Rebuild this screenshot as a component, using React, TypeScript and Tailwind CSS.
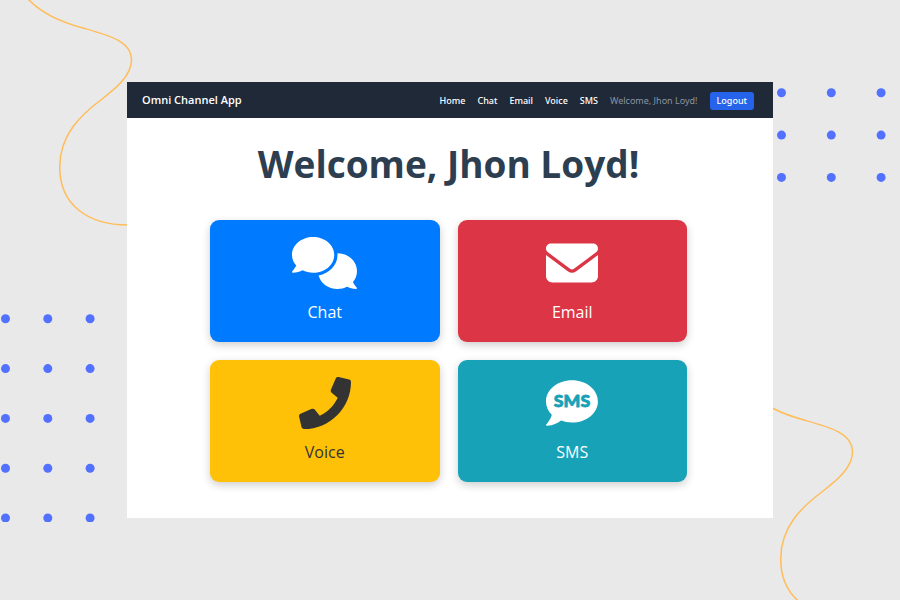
import type { ComponentType } from "react";
import { FaPhone } from "react-icons/fa";
import { FaEnvelope } from "react-icons/fa6";

const links = ["Home", "Chat", "Email", "Voice", "SMS"];

type IconProps = { className?: string };

function CommentsIcon({ className }: IconProps) {
  return (
    <svg className={className} viewBox="0 0 640 512" fill="currentColor" aria-hidden="true">
      <path d="M416 176C416 78.8 322.9 0 208 0S0 78.8 0 176c0 39.57 15.62 75.96 41.67 105.4c-16.39 32.76-39.23 57.32-39.59 57.68c-2.1 2.205-2.67 5.475-1.441 8.354C1.9 350.3 4.602 352 7.66 352c38.35 0 70.76-11.12 95.74-24.04C134.2 343.1 169.8 352 208 352C322.9 352 416 273.2 416 176zM599.6 443.7C624.8 413.9 640 376.6 640 336C640 238.8 554 160 448 160c-.3145 0-.6191 .041-.9336 .043C447.5 165.3 448 170.6 448 176c0 98.62-79.68 181.2-186.1 202.5C282.7 455.1 357.1 512 448 512c33.69 0 65.32-8.008 92.85-21.98C565.2 502 596.1 512 632.3 512c3.059 0 5.76-1.725 7.02-4.605c1.229-2.879 .6582-6.148-1.441-8.354C637.6 498.7 615.9 475.3 599.6 443.7z" />
    </svg>
  );
}

function SmsIcon({ className }: IconProps) {
  return (
    <svg className={className} viewBox="0 0 512 512" fill="currentColor" aria-hidden="true">
      <path d="M256 32C114.6 32 .0272 125.1 .0272 240c0 49.63 21.35 94.98 56.97 130.7c-12.5 50.37-54.27 95.27-54.77 95.77c-2.25 2.25-2.875 5.734-1.5 8.734C1.979 478.2 4.75 480 8 480c66.25 0 115.1-31.76 140.6-51.39C181.2 440.9 217.6 448 256 448c141.4 0 255.1-93.13 255.1-208S397.4 32 256 32z" />
      <text
        x="256"
        y="299"
        textAnchor="middle"
        className="fill-[#17a2b8] stroke-[#17a2b8] font-['Lato',sans-serif] text-[174px] font-black"
        strokeWidth="8"
        strokeLinejoin="round"
      >
        SMS
      </text>
    </svg>
  );
}

const channels: {
  name: string;
  icon: ComponentType<IconProps>;
  style: string;
  width: string;
}[] = [
  { name: "Chat", icon: CommentsIcon, style: "bg-[#007bff] text-white", width: "w-[65px]" },
  { name: "Email", icon: FaEnvelope, style: "bg-[#dc3545] text-white", width: "w-[52px]" },
  { name: "Voice", icon: FaPhone, style: "bg-[#ffc107] text-[#333333]", width: "w-[52px]" },
  { name: "SMS", icon: SmsIcon, style: "bg-[#17a2b8] text-white", width: "w-[52px]" },
];

function Squiggle({ className }: IconProps) {
  return (
    <svg
      className={className}
      width="140"
      height="230"
      viewBox="0 0 140 230"
      fill="none"
      stroke="#ffbd59"
      strokeWidth="1.5"
      aria-hidden="true"
    >
      <path d="M28 -1C43 15 66 23.5 83 28C108 35 131.5 41 131.5 60C131.5 76 115 89 101.5 99.5C82 114 59.7 134 59.7 167C59.7 205 88 225 128 225" />
    </svg>
  );
}

function Dots({
  className,
  columns,
  rows,
  stepX,
  stepY,
  height,
}: {
  className: string;
  columns: number;
  rows: number;
  stepX: number;
  stepY: number;
  height: number;
}) {
  const dots = Array.from({ length: columns * rows }, (_, i) => i);
  const width = (columns - 1) * stepX + 10;
  return (
    <svg
      className={className}
      width={width}
      height={height}
      viewBox={`0 0 ${width} ${height}`}
      fill="#5271ff"
      aria-hidden="true"
    >
      {dots.map((i) => (
        <circle
          key={i}
          cx={4.5 + (i % columns) * stepX}
          cy={4.8 + Math.floor(i / columns) * stepY}
          r="4.5"
        />
      ))}
    </svg>
  );
}

export default function App() {
  return (
    <div className="relative flex min-h-screen items-center overflow-hidden bg-[#e9e9e9] px-[127px] font-['Noto_Sans','Open_Sans',sans-serif]">
      <Squiggle className="absolute top-0 left-0" />
      <Squiggle className="absolute right-[39px] bottom-[-22px]" />
      <Dots className="absolute top-[88px] right-[13px]" columns={3} rows={3} stepX={49.8} stepY={42.3} height={95} />
      <Dots className="absolute bottom-[78px] left-[1px]" columns={3} rows={5} stepX={42.3} stepY={49.8} height={208} />

      <div className="relative grow bg-white">
        <header className="flex h-9 items-center justify-between bg-[#1f2937] pr-[19px] pl-[15px]">
          <a href="#" className="font-['Open_Sans',sans-serif] text-[11px] leading-4 font-semibold text-white">
            Omni Channel App
          </a>
          <nav className="flex items-center gap-3 pt-px text-[9px] leading-[18px] font-medium text-white">
            {links.map((link) => (
              <a key={link} href="#">
                {link}
              </a>
            ))}
            <span className="font-normal text-[#8b94a1]">Welcome, Jhon Loyd!</span>
            <button type="button" className="rounded-[3px] bg-[#2563eb] px-[7px] font-medium">
              Logout
            </button>
          </nav>
        </header>

        <main className="pr-[86px] pb-9 pl-[83px] font-['Open_Sans',sans-serif]">
          <h1 className="pt-[18px] pb-7 text-center text-[37px] leading-14 font-bold whitespace-nowrap text-[#2c3e50]">
            Welcome, Jhon Loyd!
          </h1>
          <div className="grid grid-cols-2 gap-[18px]">
            {channels.map(({ name, icon: Icon, style, width }) => (
              <button
                key={name}
                type="button"
                className={`flex flex-col items-center rounded-[9px] pt-[17px] pb-[17px] shadow-[0_3px_8px_rgba(0,0,0,0.2)] ${style}`}
              >
                <Icon className={`h-[52px] ${width}`} />
                <span className="mt-[10px] text-[16px] leading-[26px]">{name}</span>
              </button>
            ))}
          </div>
        </main>
      </div>
    </div>
  );
}
